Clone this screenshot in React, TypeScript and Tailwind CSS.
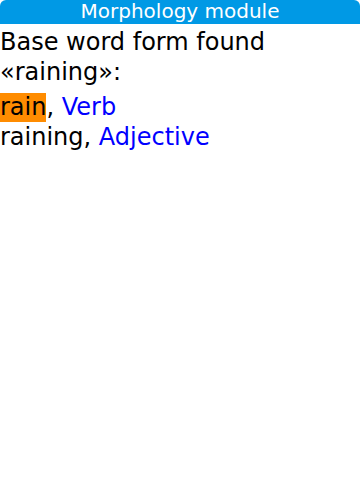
export default function App() {
  return (
    <div className="w-[360px] h-[480px] bg-white overflow-hidden" style={{ fontFamily: '"DejaVu Sans", sans-serif' }}>
      <div className="h-[24px] bg-[#0099e5] rounded-t-[6px] text-center text-white text-[20px] leading-[22px]">
        Morphology module
      </div>
      <div className="text-black text-[24px]">
        <div className="pt-[3px] leading-[30px]">
          <div>Base word form found</div>
          <div>«raining»:</div>
        </div>
        <div className="mt-[5px] leading-[30px]">
          <div>
            <span className="inline-block bg-[#ff8c00] pt-[0.7px] leading-[27.6px]">rain</span>,{' '}
            <span className="text-[#0000ff]">Verb</span>
          </div>
          <div>
            raining, <span className="text-[#0000ff]">Adjective</span>
          </div>
        </div>
      </div>
    </div>
  );
}
